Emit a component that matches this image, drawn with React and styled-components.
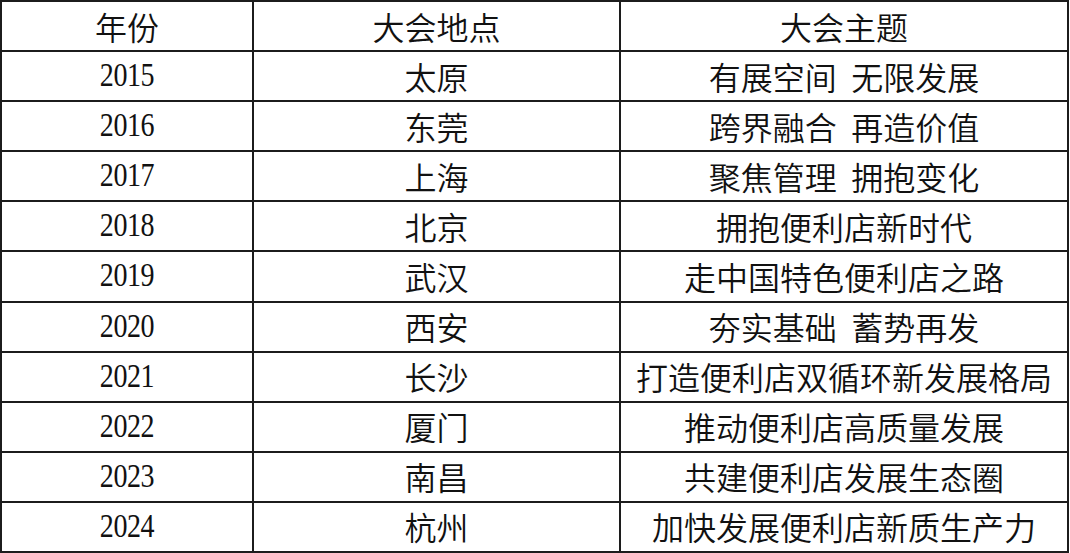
import React from 'react';
import styled, { createGlobalStyle } from 'styled-components';

const GlobalStyle = createGlobalStyle`
  html, body {
    margin: 0;
    padding: 0;
    background: #fff;
  }
  body {
    font-family: "Noto Sans CJK SC", "Noto Sans", sans-serif;
    color: #111;
  }
`;

const Table = styled.div`
  box-sizing: border-box;
  width: 1069px;
  height: 553px;
  display: grid;
  grid-template-columns: 252px 367px 1fr;
  grid-template-rows: repeat(11, 1fr);
  border-top: 2px solid #1c1c1c;
  border-left: 2px solid #1c1c1c;
`;

const Cell = styled.div`
  box-sizing: border-box;
  display: flex;
  align-items: center;
  justify-content: center;
  border-right: 2px solid #1c1c1c;
  border-bottom: 2px solid #1c1c1c;
  font-size: 32px;
  font-weight: 350;
  line-height: 1;
  white-space: pre;
  padding-bottom: 1px;
`;

const Year = styled.span`
  display: inline-block;
  font-family: "Liberation Serif", "Times New Roman", serif;
  font-size: 33px;
  font-weight: 400;
  transform: scaleX(0.85);
  letter-spacing: -0.5px;
  color: #111;
`;

const rows = [
  ['2015', '太原', '有展空间  无限发展'],
  ['2016', '东莞', '跨界融合  再造价值'],
  ['2017', '上海', '聚焦管理  拥抱变化'],
  ['2018', '北京', '拥抱便利店新时代'],
  ['2019', '武汉', '走中国特色便利店之路'],
  ['2020', '西安', '夯实基础  蓄势再发'],
  ['2021', '长沙', '打造便利店双循环新发展格局'],
  ['2022', '厦门', '推动便利店高质量发展'],
  ['2023', '南昌', '共建便利店发展生态圈'],
  ['2024', '杭州', '加快发展便利店新质生产力'],
];

export default function App() {
  return (
    <>
      <GlobalStyle />
      <Table>
        <Cell>年份</Cell>
        <Cell>大会地点</Cell>
        <Cell>大会主题</Cell>
        {rows.map(([year, city, theme]) => (
          <React.Fragment key={year}>
            <Cell><Year>{year}</Year></Cell>
            <Cell>{city}</Cell>
            <Cell>{theme}</Cell>
          </React.Fragment>
        ))}
      </Table>
    </>
  );
}
